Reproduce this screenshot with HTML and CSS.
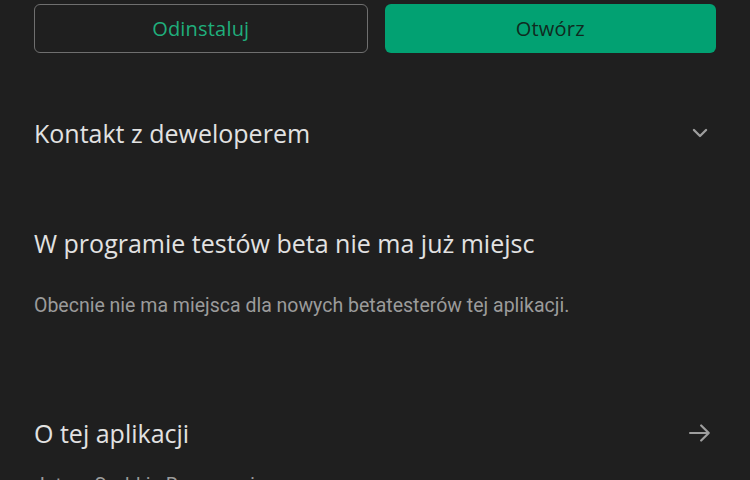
FILE: index.html
```html
<!DOCTYPE html>
<html lang="pl">
<head>
<meta charset="utf-8">
<link rel="stylesheet" href="styles.css">
</head>
<body>
<div class="page">
  <div class="actions">
    <button class="btn btn-outline">Odinstaluj</button>
    <button class="btn btn-filled">Otwórz</button>
  </div>
  <div class="row row-contact">
    <h2 class="title">Kontakt z deweloperem</h2>
    <svg class="icon" viewBox="0 0 24 24" width="28" height="28"><path d="M6.8 9.4 12 14.6l5.2-5.2" fill="none" stroke="#9e9e9e" stroke-width="2" stroke-linecap="round" stroke-linejoin="round"/></svg>
  </div>
  <div class="beta">
    <h2 class="title">W programie testów beta nie ma już miejsc</h2>
    <p class="desc">Obecnie nie ma miejsca dla nowych betatesterów tej aplikacji.</p>
  </div>
  <div class="row row-about">
    <h2 class="title">O tej aplikacji</h2>
    <svg class="icon" viewBox="0 0 24 24" width="28" height="28"><path d="M3.5 12h16M13 5.5 19.5 12 13 18.5" fill="none" stroke="#9e9e9e" stroke-width="1.9" stroke-linecap="round" stroke-linejoin="round"/></svg>
  </div>
  <p class="desc cut">Jutro - Szybkie Rezerwacje</p>
</div>
</body>
</html>
```
FILE: styles.css
```css
html, body {
  margin: 0;
  padding: 0;
  background: #1f1f1f;
  overflow: hidden;
}
.page {
  width: 750px;
  height: 480px;
  padding: 4px 34px 0 34px;
  box-sizing: border-box;
  font-family: Roboto, "Noto Sans", sans-serif;
  overflow: hidden;
}
.actions {
  display: flex;
  gap: 17px;
}
.btn {
  flex: 1;
  height: 49px;
  border-radius: 6px;
  font-family: "Open Sans", Roboto, sans-serif;
  font-size: 20px;
  font-weight: 500;
  letter-spacing: 0.2px;
  box-sizing: border-box;
}
.btn-outline {
  background: transparent;
  border: 1.5px solid #6f6f6f;
  color: #1fae7c;
}
.btn-filled {
  background: #02a172;
  border: none;
  color: #102a20;
}
.row {
  display: flex;
  align-items: center;
  justify-content: space-between;
}
.row-contact {
  margin-top: 64px;
}
.title {
  margin: 0;
  font-family: "Open Sans", Roboto, sans-serif;
  font-size: 25px;
  font-weight: 500;
  color: #e2e2e2;
  line-height: 32px;
}
.icon {
  margin-right: 2px;
}
.beta {
  margin-top: 78px;
}
.desc {
  margin: 0;
  font-size: 19.5px;
  color: #9b9b9b;
  line-height: 24px;
}
.beta .desc {
  margin-top: 35px;
}
.row-about {
  margin-top: 99px;
}
.cut {
  margin-top: 25px;
}
```
